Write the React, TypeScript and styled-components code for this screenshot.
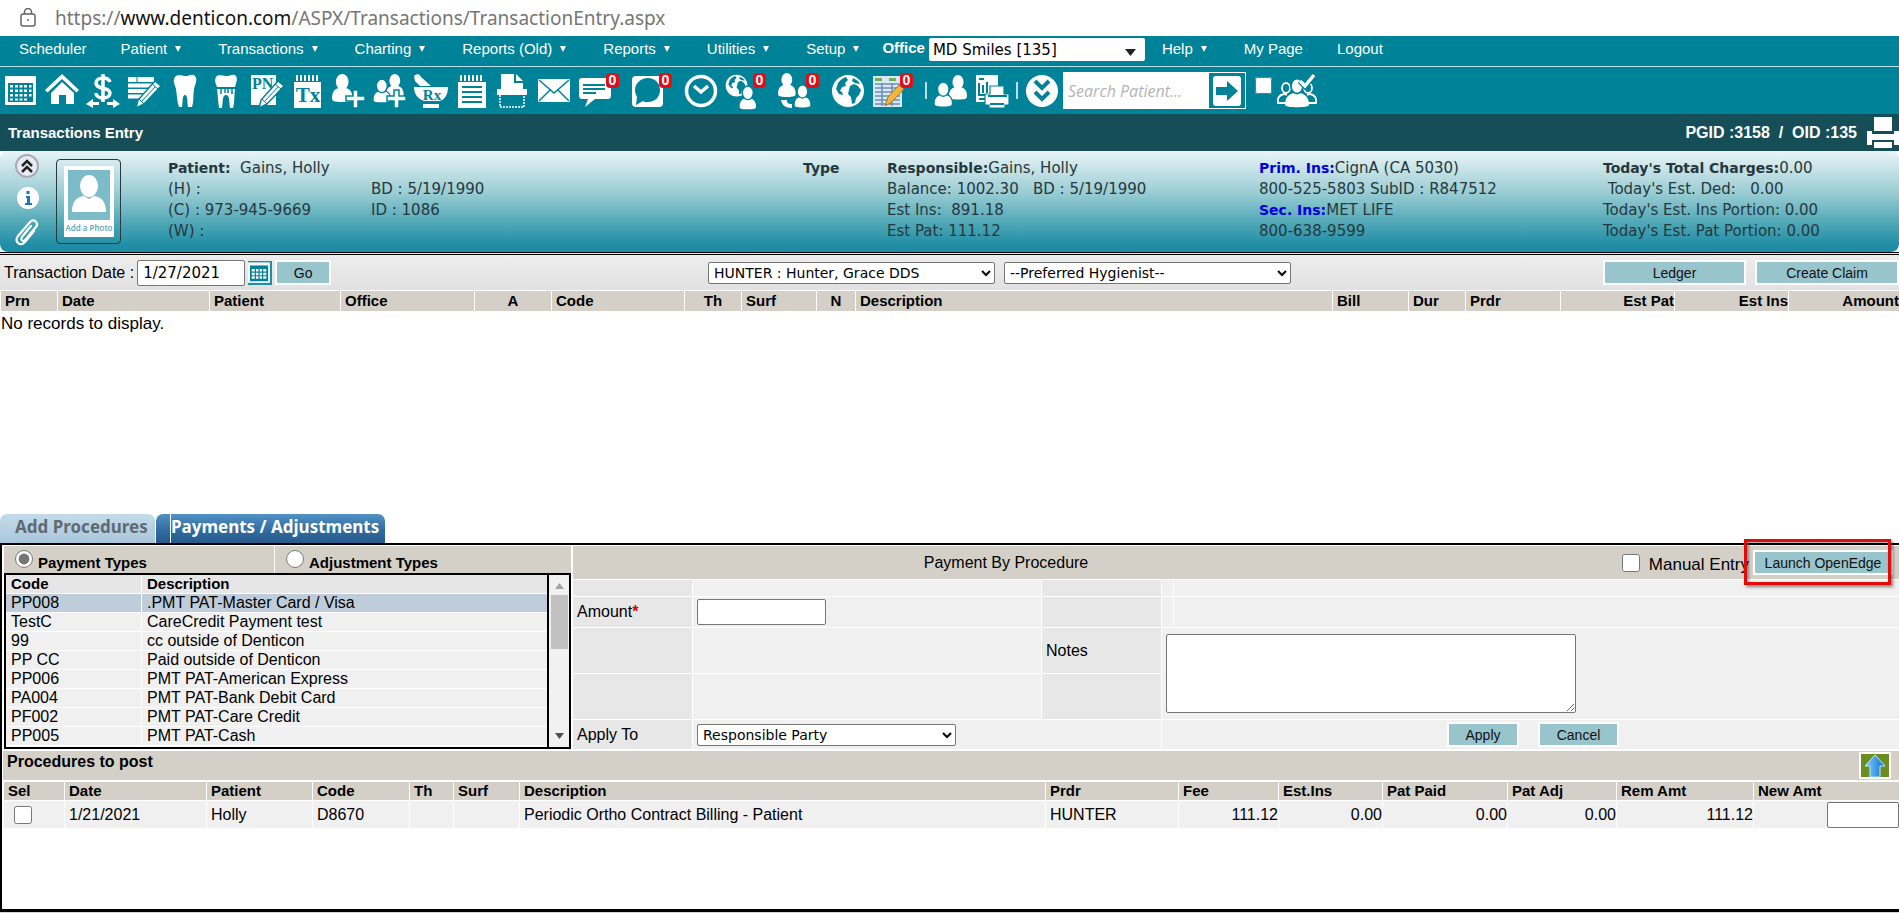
import React from "react";
import styled, { createGlobalStyle, css } from "styled-components";

const TEAL = "#008299";
const HEAD = "#d4d0c8";
const ARIAL = `"Liberation Sans", Arial, sans-serif`;
const VERDANA = `"DejaVu Sans", Verdana, sans-serif`;

const Global = createGlobalStyle`
  *, *::before, *::after { box-sizing: border-box; }
  body { margin: 0; background: #fff; color: #000; font: 16px/18px ${ARIAL}; }
  input, select, textarea, button { margin: 0; font-family: ${VERDANA}; }
`;

const Page = styled.div`
  width: 100%;
  overflow: hidden;
`;

/* ---------- address bar ---------- */
const AddressBar = styled.div`
  height: 36px;
  padding-left: 20px;
  display: flex;
  align-items: center;
  gap: 19px;
  color: #767676;
  font: 19px/36px "Noto Sans", "Open Sans", sans-serif;
  b { font-weight: 400; color: #111; }
`;

/* ---------- main menu ---------- */
const Menu = styled.nav`
  height: 31px;
  display: flex;
  align-items: flex-start;
  padding-left: 2px;
  background: ${TEAL};
  border-bottom: 1px solid #b9dfe6;
`;
const MenuLink = styled.a<{ $arrow?: boolean }>`
  padding: 0 ${(p) => (p.$arrow ? 20 : 17)}px 0 17px;
  font-size: 15px;
  line-height: 26px;
  color: #fff;
  text-decoration: none;
  white-space: nowrap;
  display: flex;
  align-items: center;
  gap: 8px;
`;
const OfficeField = styled.label`
  position: relative;
  display: flex;
  gap: 4px;
  margin-left: 3px;
  color: #fff;
  font-size: 15px;
  line-height: 24px;
  font-weight: bold;
  svg { position: absolute; right: 9px; top: 13px; }
`;
const OfficeSelect = styled.select`
  appearance: none;
  width: 216px;
  height: 23px;
  margin-top: 2px;
  padding: 0 4px;
  border: 0;
  border-radius: 2px;
  background: #fff;
  font-size: 15px;
  color: #000;
`;

/* ---------- icon toolbar ---------- */
const Toolbar = styled.div`
  height: 47px;
  display: flex;
  align-items: center;
  gap: 7px;
  padding-left: 4px;
  background: ${TEAL};
`;
const Tool = styled.button<{ $badge?: boolean }>`
  position: relative;
  flex: none;
  width: 34px;
  height: 34px;
  margin-right: ${(p) => (p.$badge ? 12 : 0)}px;
  padding: 0;
  border: 0;
  background: none;
  svg { display: block; overflow: visible; }
`;
const Badge = styled.span`
  position: absolute;
  top: -1px;
  right: -7px;
  width: 13px;
  height: 15px;
  border-radius: 4px;
  background: #e30d17;
  color: #fff;
  font: bold 14px/15px ${ARIAL};
  text-align: center;
`;
const Divider = styled.i`
  width: 2px;
  height: 17px;
  background: #b8e0e6;
`;
const SearchBox = styled.form`
  display: flex;
  width: 183px;
  height: 37px;
  margin-left: -3px;
  background: #fff;
`;
const SearchInput = styled.input`
  flex: 1;
  min-width: 0;
  border: 0;
  outline: 0;
  padding: 0 5px;
  background: #fff;
  font: italic 16px "Open Sans", sans-serif;
  &::placeholder { color: #b4b4b4; opacity: 1; }
`;
const SearchButton = styled.button`
  width: 36px;
  margin: 1px;
  padding: 0;
  border: 0;
  background: ${TEAL};
  display: grid;
  place-items: center;
`;
const FilterToggle = styled.input`
  align-self: flex-start;
  width: 17px;
  height: 17px;
  margin: 10px -3px 0 2px;
`;

/* ---------- title bar ---------- */
const TitleBar = styled.header`
  height: 37px;
  display: flex;
  align-items: center;
  justify-content: space-between;
  padding-left: 8px;
  background: #164e58;
  color: #fff;
  h1 { margin: 0; font-size: 15px; }
`;
const Ids = styled.div`
  display: flex;
  align-items: center;
  gap: 9px;
  font-size: 16px;
  font-weight: bold;
  svg { display: block; }
`;

/* ---------- patient panel ---------- */
const PatientPanel = styled.section`
  height: 101px;
  display: flex;
  border-radius: 8px;
  background: linear-gradient(#e9f4f6, #9dced5 40%, #53a9b7 70%, #1e8da5 94%);
  color: #25383d;
  font: 15px/21px ${VERDANA};
  b, a { font-size: 14px; }
`;
const SideIcons = styled.div`
  width: 56px;
  padding: 3px 0 0 15px;
  display: flex;
  flex-direction: column;
  gap: 8px;
`;
const PhotoFrame = styled.div`
  width: 65px;
  height: 85px;
  margin: 8px 47px 0 0;
  padding: 6px;
  border: 1px solid #263b40;
  border-radius: 4px;
  display: grid;
  place-items: center;
`;
const Info = styled.div`
  flex: 1;
  display: grid;
  grid-template-columns: 203fr 432fr 84fr 372fr 344fr 296fr;
  padding-top: 7px;
`;
const Lines = styled.div`
  display: flex;
  flex-direction: column;
  white-space: pre;
  min-width: 0;
  span { height: 21px; }
  a { color: #0000dd; font-weight: bold; text-decoration: none; }
`;
const DoubleRule = styled.div`
  height: 3px;
  background: #e9e9c9;
  border-top: 1px solid #000;
  border-bottom: 1px solid #000;
`;

/* ---------- filter row ---------- */
const FilterRow = styled.div`
  height: 35px;
  display: grid;
  grid-template-columns: 708fr 895fr 296fr;
  align-items: center;
  background: linear-gradient(#ededed, #e1e1e1);
`;
const Group = styled.div<{ $gap: number; $pad?: number }>`
  display: flex;
  align-items: center;
  gap: ${(p) => p.$gap}px;
  padding-left: ${(p) => p.$pad ?? 0}px;
  label { white-space: nowrap; }
`;
const TextBox = styled.input<{ $w: number }>`
  width: ${(p) => p.$w}px;
  height: 26px;
  padding: 0 5px;
  border: 1px solid #767676;
  border-radius: 2px;
  background: #fff;
  font-size: 15px;
`;
const Select = styled.select<{ $w: number }>`
  width: ${(p) => p.$w}px;
  height: 22px;
  padding: 0 1px;
  border: 1px solid #767676;
  border-radius: 2px;
  background: #fff;
  color: #000;
  font-size: 14px;
`;
const IconButton = styled.button`
  padding: 0;
  border: 0;
  background: none;
  svg { display: block; }
`;
const Button = styled.button<{ $w: number }>`
  flex: none;
  width: ${(p) => p.$w}px;
  height: 25px;
  padding: 0;
  border: 2px solid #fff;
  background: #98c4cb;
  color: #111;
  font: 14px/20px ${ARIAL};
  white-space: nowrap;
`;

/* ---------- data tables ---------- */
const Grid = styled.table`
  width: 100%;
  table-layout: fixed;
  border-collapse: separate;
  border-spacing: 0;
  white-space: nowrap;
`;
const cell = css<{ $align?: string }>`
  padding: 0 ${(p) => (p.$align === "right" ? 0 : 4)}px 0 4px;
  text-align: ${(p) => p.$align || "left"};
  border-left: 1px solid #fff;
  border-top: 1px solid #fff;
`;
const Th = styled.th<{ $align?: string; $h?: number }>`
  ${cell}
  height: ${(p) => p.$h ?? 21}px;
  background: ${HEAD};
  font-size: 15px;
`;
const Td = styled.td<{ $align?: string }>`
  ${cell}
  height: 28px;
  background: #f0f0f0;
  font-size: 16px;
`;
const Records = styled.div`
  min-height: 224px;
  p { margin: 0; padding: 4px 1px; font-size: 17px; line-height: 18px; }
`;

/* ---------- tabs ---------- */
const Tabs = styled.div`
  display: flex;
  gap: 1px;
`;
const Tab = styled.button<{ $active?: boolean }>`
  height: 29px;
  width: ${(p) => (p.$active ? 229 : 155)}px;
  padding: 0;
  padding-left: 14px;
  border: 0;
  border-radius: 7px 7px 0 0;
  text-align: left;
  font: bold 17px/26px "Noto Sans", sans-serif;
  white-space: nowrap;
  color: ${(p) => (p.$active ? "#fff" : "#5f6b73")};
  background: ${(p) =>
    p.$active ? "linear-gradient(#5191c4, #2f6a9f 60%, #28598a)" : "linear-gradient(#c4dcea, #a9c6dc)"};
  span {
    display: block;
    height: 29px;
    border-left: 1px solid ${(p) => (p.$active ? "#fff" : "transparent")};
  }
`;

/* ---------- entry panel ---------- */
const EntryPanel = styled.section`
  border: 2px solid #000;
  border-right: 0;
  border-bottom-width: 3px;
`;
const EntryTop = styled.div`
  display: flex;
  gap: 2px;
  padding: 1px 0 2px 2px;
`;
const TypesPane = styled.div`
  flex: none;
  width: 567px;
  display: flex;
  flex-direction: column;
`;
const RadioRow = styled.div`
  height: 27px;
  display: grid;
  grid-template-columns: 270px 1fr;
  gap: 1px;
`;
const RadioLabel = styled.label`
  display: flex;
  gap: 5px;
  padding-left: 11px;
  background: ${HEAD};
  font-size: 15px;
  font-weight: bold;
  line-height: 34px;
  input { width: 18px; height: 18px; margin-top: 4px; accent-color: #767676; }
`;
const ListBox = styled.div`
  flex: 1;
  display: flex;
  border: 2px solid #000;
  background: #fff;
`;
const TypeTable = styled(Grid)`
  flex: 1;
  align-self: flex-start;
`;
const TypeHead = styled.th`
  height: 18px;
  padding: 0 5px;
  border-left: 1px solid #fff;
  background: #e6e6e6;
  text-align: left;
  font-size: 15px;
  line-height: 18px;
  &:first-child { border-left: 0; }
`;
const TypeCell = styled.td<{ $on?: boolean }>`
  height: 19px;
  padding: 0 5px;
  border-left: 1px solid #fff;
  border-top: 1px solid #fff;
  background: ${(p) => (p.$on ? "#bfccd9" : "#f0f0f0")};
  line-height: 18px;
  &:first-child { border-left: 0; }
`;
const Scrollbar = styled.div`
  width: 22px;
  padding: 8px 2px;
  border-left: 2px solid #000;
  background: #f1f1f1;
  display: flex;
  flex-direction: column;
  align-items: center;
  svg { display: block; }
`;
const Thumb = styled.div`
  width: 17px;
  height: 54px;
  margin: 6px 0 auto;
  background: #c1c1c1;
`;
const FormPane = styled.div`
  flex: 1;
  display: grid;
  gap: 1px;
  grid-template-columns: 119px 348fr 119px 11px 725fr;
  grid-template-rows: 33px 16px 30px 45px 45px 29px;
`;
const FormHead = styled.div`
  grid-column: 1 / -1;
  display: grid;
  grid-template-columns: 866fr 460fr;
  align-items: center;
  background: ${HEAD};
`;
const Center = styled.span`
  text-align: center;
`;
const HeadTools = styled.div`
  display: flex;
  align-items: center;
  justify-content: flex-end;
  gap: 4px;
  padding-right: 6px;
  label { display: flex; align-items: center; gap: 9px; white-space: nowrap; font-size: 17px; }
  label span { padding-top: 4px; }
  input { width: 18px; height: 18px; }
`;
const Highlight = styled.div`
  position: relative;
  display: flex;
  &::after {
    content: "";
    position: absolute;
    inset: -11px 2px -10px -9px;
    border: 3px solid #e00b0b;
    box-shadow: 2px 2px 3px rgba(0, 0, 0, 0.45), inset 2px 2px 3px rgba(0, 0, 0, 0.35);
    pointer-events: none;
  }
`;
const FormCell = styled.div<{ $label?: boolean; $cols?: number; $rows?: number }>`
  grid-column: span ${(p) => p.$cols ?? 1};
  grid-row: span ${(p) => p.$rows ?? 1};
  display: flex;
  align-items: center;
  padding-left: 4px;
  background: ${(p) => (p.$label ? "#e7e7e7" : "#f0f0f0")};
  em { color: #e00000; font-style: normal; font-weight: bold; }
`;
const Actions = styled(FormCell)`
  gap: 19px;
  padding-left: 285px;
`;
const Notes = styled.textarea`
  width: 410px;
  height: 79px;
  border: 1px solid #767676;
  border-radius: 2px;
  background: #fff;
`;

/* ---------- procedures ---------- */
const ProcBar = styled.div`
  height: 29px;
  display: flex;
  justify-content: space-between;
  margin-left: 1px;
  padding: 1px 8px 0 4px;
  background: ${HEAD};
  h2 { margin: 0; font-size: 16px; line-height: 20px; }
`;
const UpButton = styled.button`
  width: 32px;
  height: 27px;
  padding: 0;
  border: 2px solid #fff;
  background: #6b8e23;
  display: grid;
  place-items: center;
`;
const ProcArea = styled.div`
  min-height: 129px;
  padding: 1px 0 0 1px;
`;
const PageEnd = styled.div`
  height: 1px;
  background: #d9d9d9;
`;

/* ---------- icons ---------- */
const Svg = ({ children }: { children: React.ReactNode }) => (
  <svg width="34" height="34" viewBox="0 0 34 34" fill="#fff" aria-hidden="true">
    {children}
  </svg>
);
const serif = { fontFamily: "Liberation Serif, serif", fontWeight: 700 };
const Pencil = () => (
  <>
    <path d="M9 34 11 26 28 7 34 12 17 30Z" fill="#fff" stroke={TEAL} strokeWidth="1.500" />
    <path d="M12 25 17 30M25 10 31 15M15 27 28 13" stroke={TEAL} strokeWidth="1" />
  </>
);
const Spiral = () => (
  <path d="M6 1v6M10 1v6M14 1v6M18 1v6M22 1v6M26 1v6" stroke="#fff" strokeWidth="2" />
);
const Person = ({ x, y, s = 1, outline = false }: { x: number; y: number; s?: number; outline?: boolean }) => (
  <g transform={`translate(${x} ${y}) scale(${s})`} stroke={outline ? TEAL : "none"} strokeWidth="1.600">
    <path d="M0 26C0 19 3 16 7 15h8c4 1 7 4 7 11 0 3-2 4-11 4S0 29 0 26Z" />
    <ellipse cx="11" cy="8.500" rx="6.800" ry="8.500" />
  </g>
);
const Plus = () => (
  <path d="M21 16h5v6h7v5h-7v7h-5v-7h-7v-5h7Z" stroke={TEAL} strokeWidth="1.500" />
);
const Globe = ({ s = 1 }: { s?: number }) => (
  <g transform={`scale(${s})`}>
    <circle cx="17" cy="17" r="16" />
    <path
      d="M7 9c2-3 5-5 8-6l2 3-3 3 1 3-4 1-2 4 2 1 1 3-4-1-3-5ZM19 12l4-2 4 2 3 4-2 5-3 3-1 5-3 1-1-7-3-3ZM22 4l5 3 2 3-5-1-3-2Z"
      fill={TEAL}
    />
  </g>
);

const icons: Record<string, React.ReactNode> = {
  calendar: (
    <>
      <rect x="1" y="2" width="31" height="29" rx="1" />
      <path d="M4 9h25v19H4Z" fill={TEAL} />
      <path
        d="M6 11h3v2.500H6zM11 11h3v2.500h-3zM15.500 11h3v2.500h-3zM20 11h3v2.500h-3zM25 11h2.500v2.500H25zM6 15.500h3V18H6zM11 15.500h3V18h-3zM15.500 15.500h3V18h-3zM20 15.500h3V18h-3zM25 15.500h2.500V18H25zM6 20h3v2.500H6zM11 20h3v2.500h-3zM15.500 20h3v2.500h-3zM20 20h3v2.500h-3zM25 20h2.500v2.500H25zM6 24.500h3v2H6zM11 24.500h3v2h-3zM15.500 24.500h3v2h-3zM20 24.500h3v2h-3z"
      />
    </>
  ),
  home: (
    <>
      <path d="M17 0 34 16l-2.500 2.500L17 5 2.500 18.500 0 16Z" />
      <path d="M17 8 29 19v11h-8v-9h-7v9H6V19Z" />
    </>
  ),
  dollar: (
    <>
      <path d="M24 8c-1-3-4-4-7-4-4 0-7 2-7 5 0 7 14 4 14 10 0 3-3 5-7 5s-7-2-7-5M17 0v28" fill="none" stroke="#fff" strokeWidth="3.500" />
      <path d="M0 30 7 25v3h6v3H7v3ZM34 30 27 25v3h-6v3h6v3Z" />
    </>
  ),
  ledger: (
    <>
      <path d="M1 3h26v5H1zM1 9.500h26v4H1zM1 15h22v4H1zM1 20.500h17v4H1z" />
      <path d="M10 3v6" stroke={TEAL} />
      <Pencil />
    </>
  ),
  tooth: (
    <path d="M7 3c3-3 6-1 10-1s8-3 10 0c3 4 0 8-1 13-1 6 0 12-2 18h-4c-1-5 0-12-3-12s-2 7-3 12h-3C9 28 9 21 8 15 7 11 4 7 7 3Z" />
  ),
  perio: (
    <>
      <path d="M7 3c3-3 6-1 10-1s8-3 10 0c2 4 0 7-1 11H8C7 10 5 7 7 3Z" />
      <path d="M8 15h18c-1 6 0 12-2 19h-3c-1-6 0-13-4-13s-3 7-4 13h-3C9 28 9 21 8 15Z" />
      <path d="M12 14v6M16 14v5M19 14v5M23 14v6" stroke={TEAL} strokeWidth="1.500" />
    </>
  ),
  notes: (
    <>
      <path d="M1 1h25v30H1z" />
      <text x="2" y="15" fontSize="16" fill={TEAL} style={serif}>PN</text>
      <Pencil />
    </>
  ),
  tx: (
    <>
      <path d="M3 8h27v26H3z" />
      <Spiral />
      <text x="17" y="28" fontSize="21" fill={TEAL} textAnchor="middle" style={serif}>Tx</text>
    </>
  ),
  addPatient: (
    <>
      <Person x={0} y={0} s={0.93} />
      <Plus />
    </>
  ),
  addFamily: (
    <>
      <Person x={13} y={0} s={0.8} />
      <Person x={0} y={5} s={0.8} outline />
      <Plus />
    </>
  ),
  rx: (
    <>
      <path d="M0 2c3-3 6-2 7 1l10 9H6L1 7Z" />
      <path d="M0 13h34c0 7-3 13-9 14H10C4 25 0 20 0 13ZM9 30h16v4H9z" />
      <text x="18" y="26" fontSize="15" fill={TEAL} textAnchor="middle" style={serif}>Rx</text>
    </>
  ),
  notepad: (
    <>
      <path d="M3 8h28v26H3z" />
      <Spiral />
      <path d="M7 13h20M7 18h20M7 23h20M7 28h20" stroke={TEAL} strokeWidth="2" />
    </>
  ),
  scan: (
    <>
      <path d="M5 0h13v9h9v9H5z" />
      <path d="M20 0 27 7h-7z" />
      <path d="M1 15h4v3h22v-3h4v6H1z" />
      <path d="M4 21v12h24V21" fill="none" stroke="#fff" strokeWidth="1.500" strokeDasharray="2 1" />
    </>
  ),
  mail: (
    <>
      <rect x="1" y="5" width="32" height="23" rx="1" />
      <path d="m2 6 15 13L32 6M2 27l11-11M32 27 21 16" fill="none" stroke={TEAL} strokeWidth="1.500" />
    </>
  ),
  chat: (
    <>
      <path d="M4 4h26q3 0 3 3v14q0 4-3 4H17L7 33l3-8H4q-3 0-3-4V7q0-3 3-3Z" />
      <path d="M5 11h22M5 15h22M5 19h13" stroke={TEAL} strokeWidth="1.800" />
    </>
  ),
  bubble: (
    <>
      <rect x="1" y="2" width="31" height="31" rx="4" />
      <path d="M17 4c7 0 12 5 12 12s-5 12-12 12c-2 0-4 0-5-1l-7 4 1-8c-1-2-2-4-2-7C4 9 10 4 17 4Z" fill={TEAL} />
    </>
  ),
  clock: (
    <>
      <circle cx="17" cy="17" r="14.500" fill="none" stroke="#fff" strokeWidth="3.500" />
      <path d="m10 12 7 6 7-6" fill="none" stroke="#fff" strokeWidth="3.500" />
    </>
  ),
  globePerson: (
    <>
      <Globe s={0.68} />
      <Person x={14} y={12} s={0.8} outline />
    </>
  ),
  transfer: (
    <>
      <Person x={0} y={-1} s={0.8} />
      <Person x={16} y={11} s={0.77} outline />
      <path d="M3 26h6c0 3 1 4 5 4v4C7 34 4 31 3 26Z" />
    </>
  ),
  globe: <Globe />,
  sheet: (
    <>
      <rect x="1" y="2" width="29" height="31" fill="#d9e9f5" />
      <path d="M3 4h7v3H3zM17 4h7v3h-7z" fill="#6fae57" />
      <path d="M3 10h25M3 14h25M3 18h25M3 22h25M3 26h25M3 30h25M10 9v23M20 9v23" stroke="#6d8fb5" strokeWidth="1.500" />
      <path d="m13 32 3-9L27 11l5 4-12 13Z" fill="#f3b63a" stroke="#a7742a" />
    </>
  ),
  family: (
    <>
      <Person x={15} y={1} s={0.82} />
      <Person x={0} y={8} s={0.84} outline />
    </>
  ),
  report: (
    <>
      <path d="M1 1h22v27H1z" />
      <path d="M4 5h5M4 9v12h14M8 19v-8M12 19V8M16 19v-7M4 25h8" stroke={TEAL} strokeWidth="2" fill="none" />
      <path d="M15 12h14v8h5v11h-4v3H14v-3h-4V20h5z" stroke={TEAL} strokeWidth="1.200" />
      <path d="M13 22h19M15 30h14" stroke={TEAL} strokeWidth="2" />
    </>
  ),
  expand: (
    <>
      <circle cx="17" cy="17" r="16" />
      <path d="m10 7 7 7 7-7M10 18l7 7 7-7" fill="none" stroke={TEAL} strokeWidth="4" />
    </>
  ),
};

const Caret = () => (
  <svg width="6" height="6" viewBox="0 0 6 6" fill="#fff" aria-hidden="true"><path d="M0 0h6L3 6z" /></svg>
);

/* ---------- data ---------- */
const menuLeft = ["Scheduler", "Patient", "Transactions", "Charting", "Reports (Old)", "Reports", "Utilities", "Setup"];
const tools: [string, string, boolean?][] = [
  ["calendar", "Scheduler"], ["home", "Home"], ["dollar", "Transactions"], ["ledger", "Ledger"],
  ["tooth", "Charting"], ["perio", "Perio"], ["notes", "Progress notes"], ["tx", "Treatment plan"],
  ["addPatient", "Add patient"], ["addFamily", "Add family"], ["rx", "Prescriptions"], ["notepad", "Notes"],
  ["scan", "Scan"], ["mail", "Mail"], ["chat", "Messages", true], ["bubble", "Chat", true], ["clock", "Time clock"],
  ["globePerson", "Online patients", true], ["transfer", "Referrals", true], ["globe", "Web"], ["sheet", "Forms", true],
];
const recordCols: [string, number | null, string?][] = [
  ["Prn", 57], ["Date", 152], ["Patient", 131], ["Office", 134], ["A", 77, "center"], ["Code", 133],
  ["Th", 57, "center"], ["Surf", 75], ["N", 39, "center"], ["Description", null], ["Bill", 76], ["Dur", 57],
  ["Prdr", 95], ["Est Pat", 114, "right"], ["Est Ins", 114, "right"], ["Amount", 111, "right"],
];
const types = [
  ["PP008", ".PMT PAT-Master Card / Visa"], ["TestC", "CareCredit Payment test"], ["99", "cc outside of Denticon"],
  ["PP CC", "Paid outside of Denticon"], ["PP006", "PMT PAT-American Express"], ["PA004", "PMT PAT-Bank Debit Card"],
  ["PF002", "PMT PAT-Care Credit"], ["PP005", "PMT PAT-Cash"],
];
const procCols: [string, number | null, string, string?][] = [
  ["Sel", 61, ""], ["Date", 142, "1/21/2021"], ["Patient", 106, "Holly"], ["Code", 97, "D8670"], ["Th", 44, ""],
  ["Surf", 66, ""], ["Description", null, "Periodic Ortho Contract Billing - Patient"], ["Prdr", 133, "HUNTER"],
  ["Fee", 100, "111.12", "right"], ["Est.Ins", 104, "0.00", "right"], ["Pat Paid", 125, "0.00", "right"],
  ["Pat Adj", 109, "0.00", "right"], ["Rem Amt", 137, "111.12", "right"], ["New Amt", 146, "", "right"],
];
const SelCell = styled(Td)`
  padding-left: 10px;
  input { display: block; width: 18px; height: 18px; }
`;
const AmountCell = styled(Td)`
  input { display: block; margin-left: auto; }
`;

export default function App() {
  return (
    <Page>
      <Global />
      <AddressBar>
        <svg width="16" height="20" viewBox="0 0 16 20" fill="none" stroke="#666" strokeWidth="1.500" aria-hidden="true">
          <rect x="1" y="6" width="14" height="12" rx="2" />
          <path d="M4.500 6V4a3.500 3.500 0 0 1 7 0v2" />
          <circle cx="8" cy="12" r="1" fill="#666" stroke="none" />
        </svg>
        <span>https://<b>www.denticon.com</b>/ASPX/Transactions/TransactionEntry.aspx</span>
      </AddressBar>

      <Menu>
        {menuLeft.map((m, i) => (
          <MenuLink key={m} href="#" $arrow={i > 0}>{m}{i > 0 && <Caret />}</MenuLink>
        ))}
        <OfficeField>
          Office
          <OfficeSelect><option>MD Smiles [135]</option></OfficeSelect>
          <svg width="11" height="7" viewBox="0 0 11 7" aria-hidden="true"><path d="M0 0h11L5.500 7z" fill="#222" /></svg>
        </OfficeField>
        <MenuLink href="#" $arrow>Help<Caret /></MenuLink>
        <MenuLink href="#">My Page</MenuLink>
        <MenuLink href="#">Logout</MenuLink>
      </Menu>

      <Toolbar>
        {tools.map(([k, label, badge]) => (
          <Tool key={k} $badge={badge} aria-label={label}>
            <Svg>{icons[k]}</Svg>
            {badge && <Badge>0</Badge>}
          </Tool>
        ))}
        <Divider />
        <Tool aria-label="Family"><Svg>{icons.family}</Svg></Tool>
        <Tool aria-label="Reports"><Svg>{icons.report}</Svg></Tool>
        <Divider />
        <Tool aria-label="More"><Svg>{icons.expand}</Svg></Tool>
        <SearchBox>
          <SearchInput placeholder="Search Patient..." aria-label="Search Patient" />
          <SearchButton type="button" aria-label="Search">
            <svg width="30" height="30" viewBox="0 0 30 30" aria-hidden="true">
              <rect x="1" width="28" height="30" rx="3" fill="#fff" />
              <path d="M4 11h11V5l11 10-11 10v-6H4z" fill={TEAL} />
            </svg>
          </SearchButton>
        </SearchBox>
        <FilterToggle type="checkbox" aria-label="Search all" />
        <Tool aria-label="Patients">
          <svg width="42" height="34" viewBox="0 0 42 34" fill="none" stroke="#fff" strokeWidth="1.800" aria-hidden="true">
            <ellipse cx="10" cy="14" rx="4" ry="5" />
            <ellipse cx="32" cy="14" rx="4" ry="5" />
            <path d="M10 29H2c-1-5 1-8 6-9l3 1M32 29h8c1-5-1-8-6-9l-3 1" />
            <path d="M9 31c0-8 4-11 9-12h6c5 1 9 4 9 12 0 3-24 3-24 0Z" fill="#fff" stroke="none" />
            <ellipse cx="21" cy="12" rx="6" ry="7.500" fill="#fff" stroke={TEAL} />
            <path d="m24 7 5 5L38 1" stroke={TEAL} strokeWidth="6" />
            <path d="m24 7 5 5L38 1" strokeWidth="3.500" />
          </svg>
        </Tool>
      </Toolbar>

      <TitleBar>
        <h1>Transactions Entry</h1>
        <Ids>
          <span>PGID :3158 &nbsp;/ &nbsp;OID :135</span>
          <svg width="33" height="32" viewBox="0 0 33 32" fill="#fff" aria-hidden="true">
            <path d="M8 0h18v14H8zM1 14h5v3h22v-3h5v14h-5v-5H6v5H1zM8 25h18v6H8z" />
          </svg>
        </Ids>
      </TitleBar>

      <PatientPanel>
        <SideIcons>
          <svg width="24" height="24" viewBox="0 0 24 24" aria-hidden="true">
            <circle cx="12" cy="12" r="11" fill="#e8ebf2" stroke="#a9a9b5" strokeWidth="2" />
            <path d="m7 12 5-5 5 5M7 18l5-5 5 5" fill="none" stroke="#222" strokeWidth="2.500" />
          </svg>
          <svg width="24" height="24" viewBox="0 0 24 24" aria-hidden="true">
            <circle cx="13" cy="12" r="11" fill="#fff" />
            <path d="M11 10h4v7h2v2h-7v-2h2v-5h-1zM11.500 5h3v3h-3z" fill="#1976c4" />
          </svg>
          <svg width="24" height="28" viewBox="0 0 24 28" fill="none" stroke="#fff" strokeWidth="2.200" strokeLinecap="round" aria-hidden="true">
            <path d="M16 8 7 19c-2 3 1 5 3 3L21 9c3-4-2-9-6-5L3 18c-4 6 2 11 7 6l9-11" />
          </svg>
        </SideIcons>
        <PhotoFrame>
          <svg width="50" height="71" viewBox="0 0 50 71" aria-hidden="true">
            <rect width="50" height="71" fill="#fff" />
            <rect x="4" y="4" width="42" height="50" fill="#7cbcc8" />
            <ellipse cx="25" cy="20" rx="9" ry="11" fill="#fff" />
            <path d="M8 46c0-11 5-15 12-16l5 3 5-3c7 1 12 5 12 16Z" fill="#fff" />
            <text x="25" y="65" textAnchor="middle" fontSize="8" fontFamily="Open Sans, sans-serif" fontWeight="600" fill="#5aa5b5">Add a Photo</text>
          </svg>
        </PhotoFrame>
        <Info>
          <Lines>
            <span><b>Patient:</b>{"  Gains, Holly"}</span>
            <span>(H) :</span>
            <span>(C) : 973-945-9669</span>
            <span>(W) :</span>
          </Lines>
          <Lines>
            <span>&nbsp;</span>
            <span>BD : 5/19/1990</span>
            <span>ID : 1086</span>
          </Lines>
          <Lines><b>Type</b></Lines>
          <Lines>
            <span><b>Responsible:</b>Gains, Holly</span>
            <span>{"Balance: 1002.30   BD : 5/19/1990"}</span>
            <span>{"Est Ins:  891.18"}</span>
            <span>Est Pat: 111.12</span>
          </Lines>
          <Lines>
            <span><a href="#">Prim. Ins:</a>CignA (CA 5030)</span>
            <span>800-525-5803 SubID : R847512</span>
            <span><a href="#">Sec. Ins:</a>MET LIFE</span>
            <span>800-638-9599</span>
          </Lines>
          <Lines>
            <span><b>Today's Total Charges:</b>0.00</span>
            <span>{" Today's Est. Ded:   0.00"}</span>
            <span>Today's Est. Ins Portion: 0.00</span>
            <span>Today's Est. Pat Portion: 0.00</span>
          </Lines>
        </Info>
      </PatientPanel>
      <DoubleRule />

      <FilterRow>
        <Group $gap={3} $pad={4}>
          <label htmlFor="tdate">Transaction Date :</label>
          <TextBox id="tdate" $w={108} defaultValue="1/27/2021" />
          <IconButton aria-label="Pick date">
            <svg width="24" height="24" viewBox="0 0 34 34" fill="#fff" aria-hidden="true">
              <rect width="34" height="34" fill="#1d90a5" />
              <rect x="0" y="2" width="31" height="29" fill="#fff" />
              <g transform="translate(1 2) scale(.86)"><path d="M2 5h30v26H2Z" fill={TEAL} />
                <path d="M5 11h5v4H5zM12 11h4v4h-4zM18 11h4v4h-4zM24 11h5v4h-5zM5 17h5v4H5zM12 17h4v4h-4zM18 17h4v4h-4zM24 17h5v4h-5zM5 23h5v4H5zM12 23h4v4h-4zM18 23h4v4h-4zM24 23h5v4h-5z" />
              </g>
            </svg>
          </IconButton>
          <Button $w={56}>Go</Button>
        </Group>
        <Group $gap={9}>
          <Select $w={287} aria-label="Provider"><option>HUNTER : Hunter, Grace DDS</option></Select>
          <Select $w={287} aria-label="Hygienist"><option>--Preferred Hygienist--</option></Select>
        </Group>
        <Group $gap={9}>
          <Button $w={143}>Ledger</Button>
          <Button $w={144}>Create Claim</Button>
        </Group>
      </FilterRow>

      <Records>
        <Grid>
          <colgroup>{recordCols.map(([n, w]) => <col key={n} width={w ?? undefined} />)}</colgroup>
          <thead>
            <tr>{recordCols.map(([n, , a]) => <Th key={n} $align={a}>{n}</Th>)}</tr>
          </thead>
        </Grid>
        <p>No records to display.</p>
      </Records>

      <Tabs>
        <Tab><span>Add Procedures</span></Tab>
        <Tab $active><span>Payments / Adjustments</span></Tab>
      </Tabs>

      <EntryPanel>
        <EntryTop>
          <TypesPane>
            <RadioRow>
              <RadioLabel><input type="radio" name="kind" defaultChecked />Payment Types</RadioLabel>
              <RadioLabel><input type="radio" name="kind" />Adjustment Types</RadioLabel>
            </RadioRow>
            <ListBox>
              <TypeTable>
                <colgroup><col width="135" /><col /></colgroup>
                <thead><tr><TypeHead>Code</TypeHead><TypeHead>Description</TypeHead></tr></thead>
                <tbody>
                  {types.map(([c, d], i) => (
                    <tr key={c}><TypeCell $on={i === 0}>{c}</TypeCell><TypeCell $on={i === 0}>{d}</TypeCell></tr>
                  ))}
                </tbody>
              </TypeTable>
              <Scrollbar>
                <svg width="9" height="6" viewBox="0 0 9 6" aria-hidden="true"><path d="M0 6h9L4.500 0z" fill="#a3a3a3" /></svg>
                <Thumb />
                <svg width="9" height="6" viewBox="0 0 9 6" aria-hidden="true"><path d="M0 0h9L4.500 6z" fill="#505050" /></svg>
              </Scrollbar>
            </ListBox>
          </TypesPane>

          <FormPane>
            <FormHead>
              <Center>Payment By Procedure</Center>
              <HeadTools>
                <label><input type="checkbox" /><span>Manual Entry</span></label>
                <Highlight><Button $w={140}>Launch OpenEdge</Button></Highlight>
              </HeadTools>
            </FormHead>
            <FormCell $label /><FormCell /><FormCell $label /><FormCell /><FormCell />
            <FormCell $label><label htmlFor="amount">Amount<em>*</em></label></FormCell>
            <FormCell><TextBox id="amount" $w={129} /></FormCell>
            <FormCell $label /><FormCell /><FormCell />
            <FormCell $label /><FormCell />
            <FormCell $label><label htmlFor="notes">Notes</label></FormCell>
            <FormCell $cols={2} $rows={2}><Notes id="notes" /></FormCell>
            <FormCell $label /><FormCell /><FormCell $label />
            <FormCell $label><label htmlFor="applyto">Apply To</label></FormCell>
            <FormCell $cols={2}><Select id="applyto" $w={259}><option>Responsible Party</option></Select></FormCell>
            <Actions $cols={2}>
              <Button $w={72}>Apply</Button>
              <Button $w={81}>Cancel</Button>
            </Actions>
          </FormPane>
        </EntryTop>

        <ProcBar>
          <h2>Procedures to post</h2>
          <UpButton aria-label="Move up">
            <svg width="24" height="24" viewBox="0 0 24 24" aria-hidden="true">
              <defs>
                <linearGradient id="up" x1="0" x2="1"><stop stopColor="#7fd0ff" /><stop offset="1" stopColor="#0a6fd0" /></linearGradient>
              </defs>
              <path d="M12 1 22 12h-5v11H7V12H2Z" fill="url(#up)" stroke="#bfe6ff" />
            </svg>
          </UpButton>
        </ProcBar>
        <ProcArea>
          <Grid>
            <colgroup>{procCols.map(([n, w]) => <col key={n} width={w ?? undefined} />)}</colgroup>
            <thead>
              <tr>{procCols.map(([n]) => <Th key={n} $h={19}>{n}</Th>)}</tr>
            </thead>
            <tbody>
              <tr>
                {procCols.map(([n, , v, a]) =>
                  n === "Sel" ? (
                    <SelCell key={n}><input type="checkbox" aria-label="Select procedure" /></SelCell>
                  ) : n === "New Amt" ? (
                    <AmountCell key={n} $align="right"><TextBox $w={72} aria-label="New amount" /></AmountCell>
                  ) : (
                    <Td key={n} $align={a}>{v}</Td>
                  )
                )}
              </tr>
            </tbody>
          </Grid>
        </ProcArea>
      </EntryPanel>
      <PageEnd />
    </Page>
  );
}
